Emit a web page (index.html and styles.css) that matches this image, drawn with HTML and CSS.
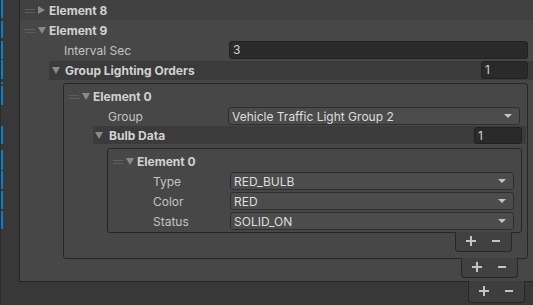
FILE: index.html
```html
<!DOCTYPE html>
<html lang="en">
  <head>
    <meta charset="UTF-8" />
    <title>Traffic Light Controller - Inspector</title>
    <link rel="stylesheet" href="styles.css">
  </head>
  <body>
    <div class="inspector">
      <div class="gutter">
        <span class="mark"></span><span class="mark"></span><span class="mark"></span>
        <span class="mark"></span><span class="mark"></span><span class="mark"></span>
        <span class="mark"></span><span class="mark"></span><span class="mark"></span>
        <span class="mark"></span><span class="mark"></span>
      </div>

      <div class="main">
        <div class="list outer-list">
          <div class="element">
            <div class="el-head">
              <span class="handle"></span>
              <span class="fold closed"></span>
              <span class="el-title">Element 8</span>
            </div>
          </div>

          <div class="element selected">
            <div class="el-head">
              <span class="handle"></span>
              <span class="fold"></span>
              <span class="el-title">Element 9</span>
            </div>
            <div class="prop">
              <span class="label interval-label">Interval Sec</span>
              <div class="field interval-field">3</div>
            </div>
            <div class="array-head group-head">
              <span class="fold"></span>
              <span class="el-title">Group Lighting Orders</span>
              <div class="field count">1</div>
            </div>

            <div class="list group-list">
              <div class="el-head">
                <span class="handle"></span>
                <span class="fold"></span>
                <span class="el-title">Element 0</span>
              </div>
              <div class="prop">
                <span class="label group-label">Group</span>
                <div class="dropdown group-drop">
                  <span>Vehicle Traffic Light Group 2</span>
                  <span class="arrow"></span>
                </div>
              </div>
              <div class="array-head bulb-head">
                <span class="fold"></span>
                <span class="el-title">Bulb Data</span>
                <div class="field count">1</div>
              </div>

              <div class="list bulb-list">
                <div class="el-head">
                  <span class="handle"></span>
                  <span class="fold"></span>
                  <span class="el-title">Element 0</span>
                </div>
                <div class="prop">
                  <span class="label bulb-label">Type</span>
                  <div class="dropdown bulb-drop"><span>RED_BULB</span><span class="arrow"></span></div>
                </div>
                <div class="prop">
                  <span class="label bulb-label">Color</span>
                  <div class="dropdown bulb-drop"><span>RED</span><span class="arrow"></span></div>
                </div>
                <div class="prop">
                  <span class="label bulb-label">Status</span>
                  <div class="dropdown bulb-drop"><span>SOLID_ON</span><span class="arrow"></span></div>
                </div>
              </div>
              <div class="footer bulb-footer">
                <svg width="10" height="10" viewBox="0 0 10 10"><rect x="0" y="4" width="10" height="2" /><rect x="4" y="0" width="2" height="10" /></svg>
                <svg width="8" height="10" viewBox="0 0 8 10"><rect x="0" y="4" width="8" height="2" /></svg>
              </div>
            </div>
            <div class="footer group-footer">
              <svg width="10" height="10" viewBox="0 0 10 10"><rect x="0" y="4" width="10" height="2" /><rect x="4" y="0" width="2" height="10" /></svg>
              <svg width="8" height="10" viewBox="0 0 8 10"><rect x="0" y="4" width="8" height="2" /></svg>
            </div>
          </div>
        </div>
        <div class="footer outer-footer">
          <svg width="10" height="10" viewBox="0 0 10 10"><rect x="0" y="4" width="10" height="2" /><rect x="4" y="0" width="2" height="10" /></svg>
          <svg width="8" height="10" viewBox="0 0 8 10"><rect x="0" y="4" width="8" height="2" /></svg>
        </div>
      </div>
    </div>
  </body>
</html>
```

FILE: styles.css
```css
* {
  box-sizing: border-box;
}

body {
  margin: 0;
  width: 533px;
  height: 305px;
  overflow: hidden;
  background: #383838;
  font-family: Inter, "Noto Sans", sans-serif;
  font-size: 12px;
  color: #c4c4c4;
}

.inspector {
  display: flex;
  height: 305px;
}

/* prefab override markers */
.gutter {
  width: 19px;
  flex: none;
  border-left: 1px solid #2c2c2c;
  display: flex;
  flex-direction: column;
}

.mark {
  display: block;
  width: 2px;
  height: 18px;
  margin-top: 2px;
  background: #0c7fc4;
}

.mark:nth-child(1) { margin-top: 0; }
.mark:nth-child(2) { margin-top: 3px; height: 17px; }
.mark:nth-child(3) { margin-top: 3px; }
.mark:nth-child(4) { margin-top: 1px; height: 19px; }
.mark:nth-child(5) { margin-top: 3px; height: 2px; }
.mark:nth-child(6) { margin-top: 2px; height: 19px; }
.mark:nth-child(7) { margin-top: 21px; }
.mark:nth-child(8) { margin-top: 6px; height: 20px; }
.mark:nth-child(9) { margin-top: 1px; }

.main {
  flex: 1;
  min-width: 0;
  display: flex;
  flex-direction: column;
}

.list {
  display: flex;
  flex-direction: column;
}

.outer-list {
  background: #414141;
  border-left: 1px solid #262626;
  border-bottom: 1px solid #262626;
}

.element {
  display: flex;
  flex-direction: column;
}

.element.selected {
  background: #474747;
  padding-bottom: 3px;
}

.el-head {
  display: flex;
  align-items: center;
  height: 20px;
  padding-left: 5px;
}

.handle {
  width: 10px;
  height: 4px;
  margin-top: 2px;
  border-top: 1px solid #5f5f5f;
  border-bottom: 1px solid #5f5f5f;
}

.fold {
  width: 0;
  height: 0;
  margin: 0 3px;
  border-top: 7px solid #8a8a8a;
  border-left: 4px solid transparent;
  border-right: 4px solid transparent;
}

.fold.closed {
  margin-right: 4px;
  border-top: 4px solid transparent;
  border-bottom: 4px solid transparent;
  border-left: 7px solid #8a8a8a;
  border-right: 0;
}

.el-title {
  font-weight: 700;
  color: #d2d2d2;
}

.prop {
  display: flex;
  align-items: center;
  height: 20px;
}

.label {
  flex: none;
}

.interval-label {
  width: 209px;
  padding-left: 44px;
}

.group-label {
  width: 164px;
  padding-left: 44px;
}

.bulb-label {
  width: 122px;
  padding-left: 45px;
}

.field {
  height: 18px;
  padding-left: 3px;
  line-height: 16px;
  background: #2a2a2a;
  border: 1px solid #212121;
  border-radius: 3px;
  color: #d2d2d2;
}

.interval-field {
  flex: 1;
  margin-right: 5px;
}

.array-head {
  display: flex;
  align-items: center;
  background: #3b3b3b;
}

.array-head .fold {
  margin: 0 5px 0 0;
}

.group-head {
  height: 19px;
  margin: 1px 0 0 29px;
  padding-left: 3px;
}

.group-head .count {
  width: 47px;
  margin-right: 5px;
  align-self: flex-start;
}

.bulb-head {
  height: 18px;
  margin: 0 1px 0 29px;
  padding-left: 2px;
}

.bulb-head .fold {
  margin-right: 6px;
}

.bulb-head .count {
  width: 48px;
  height: 17px;
  line-height: 15px;
  margin-right: 4px;
}

.count {
  margin-left: auto;
}

.group-list {
  margin: 3px 5px 0 43px;
  padding: 2px 0 6px;
  background: #474747;
  border: 1px solid #262626;
  border-radius: 3px;
}

.bulb-list {
  margin: 4px 5px 0 43px;
  padding: 2px 0 1px;
  background: #474747;
  border: 1px solid #262626;
  border-radius: 3px;
}

.dropdown {
  flex: 1;
  display: flex;
  align-items: center;
  justify-content: space-between;
  height: 18px;
  padding: 0 7px 0 3px;
  background: #4c4c4c;
  border: 1px solid #2e2e2e;
  border-radius: 3px;
  color: #dedede;
}

.group-drop {
  margin-right: 7px;
}

.bulb-drop {
  margin-right: 7px;
}

.arrow {
  width: 0;
  height: 0;
  border-top: 4px solid #c4c4c4;
  border-left: 4px solid transparent;
  border-right: 4px solid transparent;
}

/* + / - footer under each list */
.footer {
  display: flex;
  align-items: center;
  gap: 16px;
  width: 57px;
  height: 20px;
  margin-top: -1px;
  margin-left: auto;
  padding: 0 0 1px 10px;
  background: #414141;
  border: 1px solid #262626;
  border-top: 0;
  border-radius: 0 0 4px 4px;
}

.footer svg {
  fill: #c4c4c4;
}

.bulb-footer {
  margin-right: 15px;
}

.group-footer {
  margin-right: 15px;
}

.outer-footer {
  height: 22px;
  margin-right: 8px;
  background: #3e3e3e;
}
```
